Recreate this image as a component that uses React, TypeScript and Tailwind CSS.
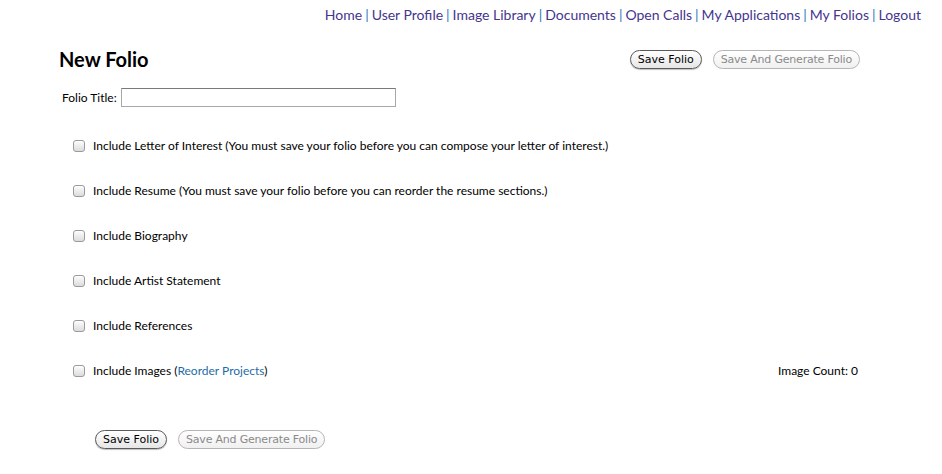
import React from "react";

const navLinks = ["Home", "User Profile", "Image Library", "Documents", "Open Calls", "My Applications", "My Folios", "Logout"];

const options = [
  "Include Letter of Interest (You must save your folio before you can compose your letter of interest.)",
  "Include Resume (You must save your folio before you can reorder the resume sections.)",
  "Include Biography",
  "Include Artist Statement",
  "Include References",
];

function Check() {
  return (
    <span className="inline-block h-[12px] w-[12px] shrink-0 rounded-[3px] border border-[#9a9a9a] bg-gradient-to-b from-[#fdfdfd] to-[#dcdcdc] shadow-[inset_0_1px_0_#fff]" />
  );
}

function Buttons() {
  return (
    <div className="flex items-center gap-[11px] font-['DejaVu_Sans',sans-serif] text-[11px]">
      <button
        type="button"
        className="h-[19px] rounded-full border border-[#5a5a5a] bg-gradient-to-b from-[#ffffff] to-[#e6e6e6] px-[7px] leading-[17px] text-black shadow-[0_1px_1px_rgba(0,0,0,0.25)]"
      >
        Save Folio
      </button>
      <button
        type="button"
        className="h-[19px] rounded-full border border-[#b5b5b5] bg-gradient-to-b from-[#ffffff] to-[#f0f0f0] px-[7px] leading-[17px] tracking-[-0.2px] text-[#8a8a8a]"
      >
        Save And Generate Folio
      </button>
    </div>
  );
}

export default function App() {
  return (
    <div className="h-[474px] w-[942px] overflow-hidden bg-white font-['Lato',sans-serif] text-black">
      <nav className="flex justify-end pr-[21px] pt-[5px] text-[14px] leading-[20px] text-[#45358f]">
        {navLinks.map((l, i) => (
          <span key={l}>
            {i > 0 && <span className="px-[3px] text-[#2a7ab8]">|</span>}
            <a href="#">{l}</a>
          </span>
        ))}
      </nav>

      <div className="flex items-center justify-between pl-[59px] pr-[82px] pt-[22px]">
        <h1 className="text-[20px] font-bold leading-[24px]">New Folio</h1>
        <Buttons />
      </div>

      <div className="mt-[13px] flex items-center gap-[4px] pl-[62px] pt-[4px] text-[12px]">
        <label>Folio Title:</label>
        <input type="text" className="h-[19px] w-[275px] border border-[#a8a8a8] border-t-[#7a7a7a] outline-none" />
      </div>

      <div className="flex flex-col pl-[73px] pr-[84px] pt-[16px] text-[12px]">
        {options.map((o) => (
          <div key={o} className="flex h-[45px] items-center gap-[8px]">
            <Check />
            <span>{o}</span>
          </div>
        ))}
        <div className="flex h-[45px] items-center gap-[8px]">
          <Check />
          <span>
            Include Images (<a href="#" className="text-[#1f6ba8]">Reorder Projects</a>)
          </span>
          <span className="ml-auto">Image Count: 0</span>
        </div>
      </div>

      <div className="pl-[95px] pt-[37px]">
        <Buttons />
      </div>
    </div>
  );
}
